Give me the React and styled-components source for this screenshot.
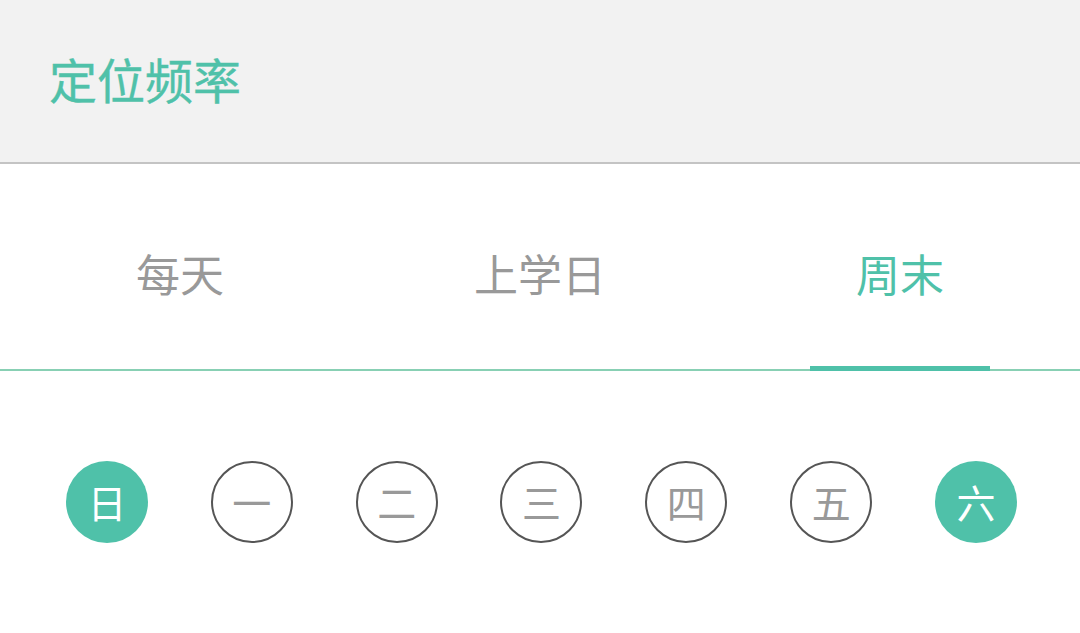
import React, { useState } from "react";
import styled, { createGlobalStyle } from "styled-components";

const Global = createGlobalStyle`
  body {
    margin: 0;
    background: #ffffff;
    font-family: "Noto Sans CJK SC", "Noto Sans", sans-serif;
  }
`;

const Header = styled.div`
  height: 162px;
  background-color: #f2f2f2;
  border-bottom: 2px solid #c4c4c4;
  display: flex;
  align-items: center;
  padding-left: 49px;
`;

const Title = styled.h1`
  margin: 0;
  font-size: 48px;
  font-weight: 400;
  color: #4fc1a9;
  line-height: 1;
  padding-bottom: 6px;
  -webkit-text-stroke: 0.4px #4fc1a9;
`;

const Tabs = styled.div`
  display: grid;
  grid-template-columns: repeat(3, 1fr);
  border-bottom: 2px solid #88d0b4;
`;

const Tab = styled.div`
  position: relative;
  height: 205px;
  display: flex;
  align-items: center;
  justify-content: center;
  font-size: 44px;
  font-weight: 400;
  color: ${(p) => (p.active ? "#4fc1a9" : "#999999")};
  cursor: pointer;
  padding-top: 12px;
  box-sizing: border-box;
  &::after {
    content: "";
    display: ${(p) => (p.active ? "block" : "none")};
    position: absolute;
    left: 90px;
    right: 90px;
    bottom: -2px;
    height: 5px;
    background-color: #4fc1a9;
  }
`;

const Days = styled.div`
  display: flex;
  justify-content: space-between;
  padding: 90px 63px 0 66px;
`;

const Day = styled.div`
  width: 82px;
  height: 82px;
  border-radius: 50%;
  box-sizing: border-box;
  display: flex;
  align-items: center;
  justify-content: center;
  font-size: 39px;
  font-weight: 400;
  line-height: 1;
  padding-bottom: 2px;
  cursor: pointer;
  background-color: ${(p) => (p.on ? "#4fc1a9" : "transparent")};
  border: ${(p) => (p.on ? "none" : "2px solid #555555")};
  color: ${(p) => (p.on ? "#ffffff" : "#999999")};
`;

const tabs = ["每天", "上学日", "周末"];
const days = ["日", "一", "二", "三", "四", "五", "六"];

export default function App() {
  const [tab, setTab] = useState(2);
  const [picked, setPicked] = useState([0, 6]);

  const toggle = (i) =>
    setPicked((p) => (p.includes(i) ? p.filter((d) => d !== i) : [...p, i]));

  return (
    <>
      <Global />
      <Header>
        <Title>定位频率</Title>
      </Header>
      <Tabs>
        {tabs.map((t, i) => (
          <Tab key={t} active={i === tab} onClick={() => setTab(i)}>
            {t}
          </Tab>
        ))}
      </Tabs>
      <Days>
        {days.map((d, i) => (
          <Day key={d} on={picked.includes(i)} onClick={() => toggle(i)}>
            {d}
          </Day>
        ))}
      </Days>
    </>
  );
}
